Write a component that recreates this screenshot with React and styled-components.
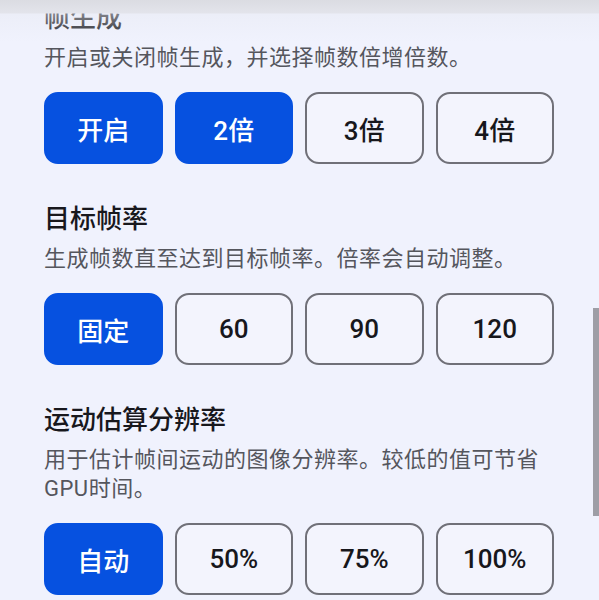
import React from 'react'
import styled, { createGlobalStyle } from 'styled-components'

const GlobalStyle = createGlobalStyle`
  html, body {
    margin: 0;
    padding: 0;
    background: #f0f2fd;
  }
  * {
    box-sizing: border-box;
  }
`;

// --- Styled Components ---
const Screen = styled.div`
  position: relative;
  width: 599px;
  height: 600px;
  overflow: hidden;
  background: #f0f2fd;
  font-family: Roboto, "Noto Sans CJK SC", sans-serif;
`;

const TopFade = styled.div`
  position: absolute;
  top: 0;
  left: 0;
  right: 0;
  height: 42px;
  pointer-events: none;
  background: linear-gradient(
    to bottom,
    #dbdce2 0px,
    #e3e4eb 13px,
    rgba(232, 234, 243, 0.5) 14px,
    rgba(240, 242, 253, 0) 42px
  );
`;

const Scrollbar = styled.div`
  position: absolute;
  top: 308px;
  right: 0;
  width: 6px;
  height: 208px;
  background: #9e9ea6;
`;

const Content = styled.div`
  display: flex;
  flex-direction: column;
  gap: 40px;
  padding: 3px 45px 0 44px;
`;

const Section = styled.section`
  display: flex;
  flex-direction: column;
`;

const Title = styled.h2`
  margin: 0;
  font-size: 26px;
  line-height: 30px;
  font-weight: 500;
  color: #18181d;
`;

const Description = styled.p`
  margin: 10px 0 0 0;
  font-size: 22px;
  letter-spacing: 0.5px;
  line-height: 29px;
  font-weight: 400;
  color: #55565d;
`;

const OptionRow = styled.div`
  display: grid;
  grid-template-columns: repeat(4, 1fr);
  gap: 12px;
  margin-top: 20px;
`;

const OptionButton = styled.button`
  height: 72px;
  border-radius: 14px;
  font-family: inherit;
  font-size: 26px;
  font-weight: 500;
  display: flex;
  align-items: center;
  justify-content: center;
  padding: 0;
  cursor: pointer;
  border: 2px solid ${({ $active }) => ($active ? '#0651e0' : '#707078')};
  background: ${({ $active }) => ($active ? '#0651e0' : '#f3f4fd')};
  color: ${({ $active }) => ($active ? '#ffffff' : '#17171c')};
`;

const sections = [
  {
    title: '帧生成',
    desc: '开启或关闭帧生成，并选择帧数倍增倍数。',
    options: ['开启', '2倍', '3倍', '4倍'],
    active: [0, 1],
  },
  {
    title: '目标帧率',
    desc: '生成帧数直至达到目标帧率。倍率会自动调整。',
    options: ['固定', '60', '90', '120'],
    active: [0],
  },
  {
    title: '运动估算分辨率',
    desc: '用于估计帧间运动的图像分辨率。较低的值可节省GPU时间。',
    options: ['自动', '50%', '75%', '100%'],
    active: [0],
  },
];

export default function App() {
  return (
    <>
      <GlobalStyle />
      <Screen>
        <Content>
          {sections.map(s => (
            <Section key={s.title}>
              <Title>{s.title}</Title>
              <Description>{s.desc}</Description>
              <OptionRow>
                {s.options.map((opt, i) => (
                  <OptionButton key={opt} $active={s.active.includes(i)}>
                    {opt}
                  </OptionButton>
                ))}
              </OptionRow>
            </Section>
          ))}
        </Content>
        <TopFade />
        <Scrollbar />
      </Screen>
    </>
  );
}
